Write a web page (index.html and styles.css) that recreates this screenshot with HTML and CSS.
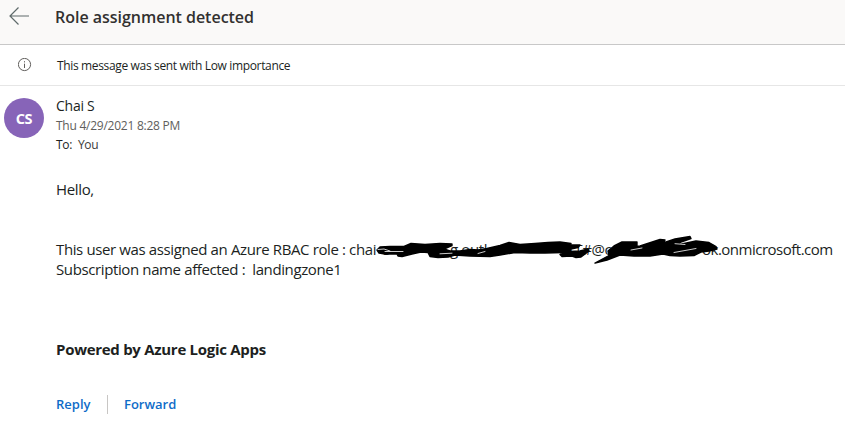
FILE: index.html
```
<!DOCTYPE html>
<html lang="en">
<head>
<meta charset="utf-8">
<title>Role assignment detected</title>
<link rel="stylesheet" href="styles.css">
</head>
<body>
<header class="header">
  <svg class="back" width="22" height="20" viewBox="0 0 22 20"><path d="M10.5 1.5 2 10 10.5 18.5M2 10H21"/></svg>
  <h1><span class="subject">Role assignment detected</span></h1>
</header>
<div class="notice">
  <svg class="info" width="14" height="14" viewBox="0 0 14 14"><circle cx="6.5" cy="6.5" r="6.1"/><path d="M6.5 5.7v4.3M6.5 3.2v1.2"/></svg>
  <span class="notice-text">This message was sent with Low importance</span>
</div>
<main class="message">
  <div class="avatar"><span>CS</span></div>
  <div class="content">
    <div class="sender"><span class="name">Chai S</span></div>
    <div class="date"><span class="date-text">Thu 4/29/2021 8:28 PM</span></div>
    <div class="to"><span class="to-label">To:</span><span class="you">You</span></div>
    <p class="hello"><span class="hello-text">Hello,</span></p>
    <div class="line assigned">
      <span class="role">This user was assigned an Azure RBAC role : chai</span>
      <span class="part-a">s</span><span class="part-b">g.outlo</span><span class="part-c">XT#@c</span><span class="part-d">ok.onmicrosoft.com</span>
      <svg class="scribble" width="360" height="40" viewBox="370 230 360 40">
        <path d="M377 251 380 248 390 247.500 404 247.500 411 244.500 425 245.500 440 244.500 452 245 452 246.500 444 250 450 252 460 252 470 250.500 478 251 487 249.500 500 246.500 509 243.500 520 245.500 535 244.500 548 243.500 560 243 571 244.500 570 246 580 246 578 248.500 571 250 570 252.500 580 252 588 250 589 252 581 258 576 258.500 572 257 562 257.500 560 255.500 563 253.500 545 254 530 254 515 253.500 500 256 490 257.500 470 257 455 256 448 258 438 258.500 430 257.500 428 253.500 421 253 412 255 402 257.500 398 257 397 255 385 255 379 254Z"/>
        <path d="M595 264 609 256.500 608 252 614 247 622 243 637 243 637 246 630 248 640 247 660 240.500 665 241 663 244 675 240 690 237.500 691 239.500 681 243 677 246 696 242 709 243.500 716 247.500 717 250 709 252 701 253 694 256.500 680 257 670 256.500 663 255 650 257 634 257 620 256 607 261Z"/>
        <path class="gap" d="M378 250.500 384 250 390 252M385 252.500 403 252.500M440 254.800 452 254.200M478 254.500 485 252.500M631 251 642 249M674 253.500 696 249.500M675 244.700 685 245.500"/>
      </svg>
    </div>
    <div class="line"><span class="subscription">Subscription name affected :&nbsp; landingzone1</span></div>
    <div class="line powered"><span class="powered-text">Powered by Azure Logic Apps</span></div>
    <div class="actions"><a class="reply">Reply</a><a class="forward"><span class="forward-text">Forward</span></a></div>
  </div>
</main>
</body>
</html>
```
FILE: styles.css
```
* { box-sizing: border-box; }
body { margin: 0; width: 845px; height: 431px; overflow: hidden; background: #fff; color: #201f1e; font-family: "Open Sans", "Noto Sans", sans-serif; white-space: nowrap; }
.header { display: flex; height: 45px; padding-left: 8px; background: #faf9f8; border-bottom: 1px solid #c8c8c8; }
.back { flex: none; margin: 6px 25px 0 0; fill: none; stroke: #5f6b6b; stroke-width: 1.2; }
h1 { margin: 0; font-size: 16px; line-height: 34px; font-weight: 600; color: #323130; }
.subject { letter-spacing: -.02px; }
.notice { display: flex; height: 41px; padding-left: 18px; border-bottom: 1px solid #e6e6e6; font-size: 12px; line-height: 42px; }
.notice-text { letter-spacing: -.35px; }
.info { flex: none; margin: 13px 25px 0 0; fill: none; stroke: #605e5c; stroke-width: 1; }
.message { display: flex; padding: 12px 0 0 4px; }
.avatar { flex: none; width: 40px; height: 40px; margin-right: 12px; border-radius: 50%; background: #8764b8; color: #fff; text-align: center; font-weight: 700; font-size: 14.5px; line-height: 41px; letter-spacing: -.3px; }
.content { width: 780px; }
.sender { height: 18px; font-size: 14px; line-height: 16px; letter-spacing: -.25px; }
.date { height: 20px; font-size: 12px; line-height: 19px; letter-spacing: -.25px; color: #605e5c; }
.to { height: 20px; display: flex; gap: 6px; font-size: 12px; line-height: 18px; letter-spacing: -.35px; }
.you { color: #3b3a39; }
.hello { margin: 23px 0 0; font-size: 15px; line-height: 20px; letter-spacing: -.35px; }
.line { height: 20px; font-size: 15px; line-height: 20px; letter-spacing: -.38px; }
.assigned { position: relative; display: flex; margin-top: 40px; }
.role { width: 327px; }
.part-a { width: 67px; }
.part-b { width: 116px; }
.part-c { width: 136px; }
.part-d { width: 130px; letter-spacing: -.5px; }
.scribble { position: absolute; left: 314px; top: -10px; fill: #000; stroke: #000; stroke-width: 1.4; stroke-linejoin: round; }
.gap { fill: none; stroke: #fff; stroke-width: .8; stroke-linecap: round; }
.powered { margin-top: 60px; font-weight: 700; letter-spacing: -.29px; }
.actions { display: flex; align-items: center; height: 20px; margin-top: 35px; font-size: 13px; line-height: 19px; font-weight: 600; color: #0f6cc8; }
.reply { width: 51px; }
.forward { padding-left: 16px; border-left: 1px solid #c8c6c4; }
```
